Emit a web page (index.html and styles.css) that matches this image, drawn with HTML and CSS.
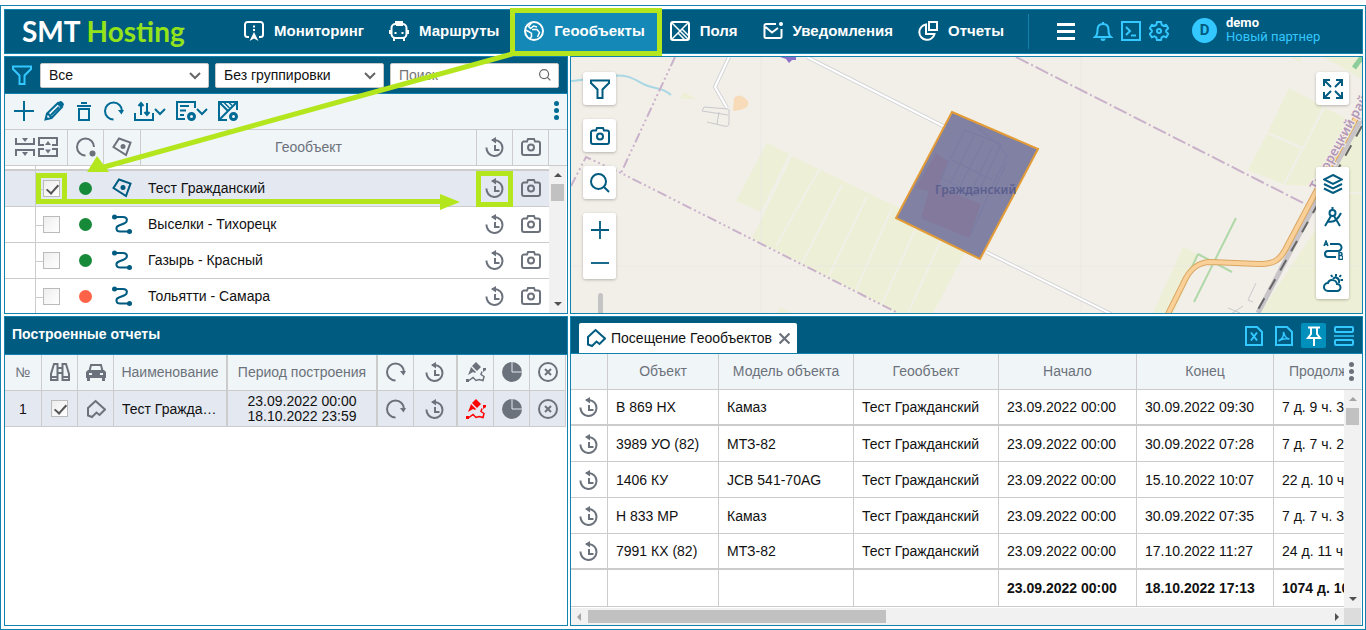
FILE: index.html
```html
<!DOCTYPE html>
<html lang="ru">
<head>
  <meta charset="UTF-8" />
  <meta name="viewport" content="width=device-width, initial-scale=1.0"/>
  <title>SMT Hosting</title>
  <link rel="stylesheet" href="styles.css">
</head>
<body>
  <!-- icon set, 20x20 grid -->
  <svg class="sprite" aria-hidden="true">
    <symbol id="i-monitor" viewBox="0 0 20 20"><path d="M5 16H3.500a2.500 2.500 0 0 1-2.500-2.500v-10A2.500 2.500 0 0 1 3.500 1h13A2.500 2.500 0 0 1 19 3.500v10a2.500 2.500 0 0 1-2.500 2.500H15M10 4.500v2M10 8v2"/><path class="fill" d="M10 11l4.500 9-4.500-2.500L5.500 20z"/></symbol>
    <symbol id="i-bus" viewBox="0 0 20 20"><rect x="2.500" y="3" width="15" height="14" rx="4"/><path d="M7 3V1h6v3H7M5 17v3M15 17v3M1 9v4M19 9v4"/><path class="fill" d="M5.500 11h2v2h-2zM12.500 11h2v2h-2z"/></symbol>
    <symbol id="i-globe" viewBox="0 0 20 20"><circle cx="10" cy="10" r="9"/><path class="line-thin" d="M8 1.500L4.500 5.500l2 2 3-2.500 3.500 1M1.500 9l3 1.500 3 2v3L6 17.500M8 8.500h5l2.500 3-2 4.500"/></symbol>
    <symbol id="i-field" viewBox="0 0 20 20"><rect x="1" y="1" width="18" height="18" rx="2"/><path class="line-thin" d="M1.500 1.500l17 17M18.500 1.500l-17 17M8 12l6.500 6.500M12 8l6.500 6.500"/></symbol>
    <symbol id="i-mail" viewBox="0 0 20 20"><path d="M13 3H3a1.500 1.500 0 0 0-1.500 1.500v11A1.500 1.500 0 0 0 3 17h14a1.500 1.500 0 0 0 1.500-1.500V8M2.500 6L9 11.500 15 7"/><circle class="fill" cx="18" cy="3" r="2"/></symbol>
    <symbol id="i-report" viewBox="0 0 20 20"><path d="M8 3.500a7.700 7.700 0 1 0 8.500 9.500H8zM11 1h8v8h-8z"/></symbol>
    <symbol id="i-menu" viewBox="0 0 20 20"><path class="thick" d="M1 3.500h18M1 10.500h18M1 17.500h18"/></symbol>
    <symbol id="i-bell" viewBox="0 0 20 20"><path d="M2 16h16c-2-1.500-2.500-3-2.500-7 0-3.500-2-6-5.500-6s-5.500 2.500-5.500 6c0 4-.5 5.500-2.500 7zM10 1v2"/><path class="fill" d="M7.500 17.500h5a2.500 2.500 0 0 1-5 0z"/></symbol>
    <symbol id="i-terminal" viewBox="0 0 20 20"><path d="M1 1h18v18H1zM5 6l4 4-4 4M10 14.500h5"/></symbol>
    <symbol id="i-gear" viewBox="0 0 20 20"><path d="M8 1h4l.7 2.800 1.800 1 2.700-.9 2 3.400-2 2v1.600l2 2-2 3.300-2.700-.8-1.800 1L12 19H8l-.7-2.600-1.800-1-2.700.8-2-3.300 2-2V9.300l-2-2 2-3.400 2.700.9 1.800-1z"/><circle cx="10" cy="10" r="2"/></symbol>
    <symbol id="i-funnel" viewBox="0 0 20 20"><path d="M1 1.500h18V4l-6.500 6.500V19h-5v-8.500L1 4z"/></symbol>
    <symbol id="i-search" viewBox="0 0 20 20"><circle cx="8.500" cy="8.500" r="7.500"/><path d="M13.500 13.500L19 19"/></symbol>
    <symbol id="i-chevron" viewBox="0 0 12 12"><path d="M1 4l5 5 5-5"/></symbol>
    <symbol id="i-plus" viewBox="0 0 20 20"><path d="M10 0v20M0 10h20"/></symbol>
    <symbol id="i-minus" viewBox="0 0 20 20"><path d="M0 10h20"/></symbol>
    <symbol id="i-pencil" viewBox="0 0 20 20"><path d="M1.500 18.500l1.500-6L14 2l4 4L7.500 17zM4 12.500l3.500 4M7 14l8-8"/><path class="fill" d="M13 3l3-3c2 0 4 2 4 4l-3 3zM1 19l1-4 3 3z"/></symbol>
    <symbol id="i-trash" viewBox="0 0 20 20"><path d="M3 5h14M7 2h6M5 8h10v11H5z"/></symbol>
    <symbol id="i-refresh" viewBox="0 0 20 20"><path d="M9.500 18.500a8.500 8.500 0 1 1 8.500-8.500"/><path class="fill" d="M14 9h6l-2.500 4.500z"/></symbol>
    <symbol id="i-transfer" viewBox="0 0 20 20"><path d="M1 12v7h18v-7M7 14V2M13 2v12M4.500 5L7 2l2.500 3M10.500 11l2.500 3 2.500-3"/></symbol>
    <symbol id="i-listclock" viewBox="0 0 20 20"><path d="M9 18H1V1h18v6M4 5h9M4 9.500h6M4 14h4"/><circle class="ring" cx="15.500" cy="15.500" r="3"/></symbol>
    <symbol id="i-fieldclock" viewBox="0 0 20 20"><path d="M9 19H1V1h18v8M1.500 1.500l8 8M18.500 1.500l-17 17"/><path class="line-thin" d="M6 1.500l5.500 5.500M11 1.500l3 3"/><circle class="ring" cx="15.500" cy="15.500" r="3"/></symbol>
    <symbol id="i-collapse" viewBox="0 0 20 20"><path d="M1 1v6h18V1M1 19v-6h18v6"/><path class="fill" d="M7 1h6l-3 4zM7 15h6l-3 4z"/></symbol>
    <symbol id="i-expand" viewBox="0 0 20 20"><path d="M6 8H1V1h18v7h-5M6 12H1v7h18v-7h-5"/><path class="fill" d="M7 8h6l-3-4zM7 12.500h6l-3 4z"/></symbol>
    <symbol id="i-status" viewBox="0 0 20 20"><path d="M9.500 18.500a8.500 8.500 0 1 1 8.500-8.500"/><circle class="fill" cx="16.500" cy="16.500" r="3"/></symbol>
    <symbol id="i-geo" viewBox="0 0 20 20"><path d="M7 1.500l11.500 4L14 18 1.500 10z"/><circle class="fill" cx="11" cy="9.500" r="2.500"/></symbol>
    <symbol id="i-route" viewBox="0 0 20 20"><path d="M3 3h8c5 0 5 5 1 6.500l-5 2c-4 1.500-3 6 1 6h9"/><circle class="fill" cx="2.500" cy="3" r="2.500"/><circle class="fill" cx="17.500" cy="17.500" r="2.500"/></symbol>
    <symbol id="i-history" viewBox="0 0 20 20"><path d="M7 3h3a8 8 0 1 1-8.500 7.500M10 8v5h4.500"/><path class="fill" d="M11 0v6.500L6 3z"/></symbol>
    <symbol id="i-camera" viewBox="0 0 20 20"><path d="M3 4.500h3L7 2h6l1 2.500h3a2 2 0 0 1 2 2V16a2 2 0 0 1-2 2H3a2 2 0 0 1-2-2V6.500a2 2 0 0 1 2-2z"/><circle cx="10" cy="10.500" r="3"/></symbol>
    <symbol id="i-binoculars" viewBox="0 0 20 20"><path d="M4 2h3.500v16H1v-6zM16 2h-3.500v16H19v-6zM8 6h4M8 11h4M1 15h6.500M12.500 15H19"/></symbol>
    <symbol id="i-car" viewBox="0 0 20 20"><path d="M3.500 9L5 3h10l1.500 6"/><path class="fill" fill-rule="evenodd" d="M2 8h16l2 2v6h-1v3h-3v-3H4v3H1v-3H0v-6zM3 11v2h3v-2zM14 11v2h3v-2z"/></symbol>
    <symbol id="i-area" viewBox="0 0 20 20"><path d="M9.500 2L19 10.500 13.500 16l-3-2.500L6 18l-4-1.500V9z"/></symbol>
    <symbol id="i-brush" viewBox="0 0 20 20"><path class="fill" d="M10 0l5 5-4 4-5-5zM5 5l5 5-1 1-2-1-5 3 2-5zM0 17h3v3H0zM17 6h3v2l-3 2z"/><path class="line-thin" d="M3 18.500l4-3 3 3 3-1 4 1 1-4-3-2 1-3"/></symbol>
    <symbol id="i-pie" viewBox="0 0 20 20"><circle class="fill" cx="10" cy="10" r="10"/><path class="light-line" d="M10 0v10h10"/></symbol>
    <symbol id="i-cancel" viewBox="0 0 20 20"><circle cx="10" cy="10" r="9"/><path d="M7 7l6 6M13 7l-6 6"/></symbol>
    <symbol id="i-close" viewBox="0 0 20 20"><path d="M1 1l18 18M19 1L1 19"/></symbol>
    <symbol id="i-xls" viewBox="0 0 20 20"><path d="M2 1h11l5 5v13H2zM7 6.500l6 8M13 6.500l-6 8"/></symbol>
    <symbol id="i-pdf" viewBox="0 0 20 20"><path d="M2 1h11l5 5v13H2z"/><path class="line-thin" d="M9.500 6c1 4 2 6 6 7-5-1-8 0-11 2 4-2 5.500-5 5-9z"/></symbol>
    <symbol id="i-pin" viewBox="0 0 20 20"><path d="M4 1.500h12M7 2v6l-3 4h12l-3-4V2M10 12v8"/></symbol>
    <symbol id="i-rows" viewBox="0 0 20 20"><rect x="1" y="1" width="18" height="5" rx="1"/><rect x="1" y="14" width="18" height="5" rx="1"/><path class="line-thin" d="M0 10h20"/></symbol>
    <symbol id="i-full" viewBox="0 0 20 20"><path d="M1 7V1h6M1 1l7 7M13 1h6v6M19 1l-7 7M1 13v6h6M1 19l7-7M19 13v6h-6M19 19l-7-7"/></symbol>
    <symbol id="i-layers" viewBox="0 0 20 20"><path d="M10 1l9 4.500-9 4.500-9-4.500zM1 10l9 4.500 9-4.500M1 14.500l9 4.500 9-4.500"/></symbol>
    <symbol id="i-compass" viewBox="0 0 20 20"><circle cx="9.500" cy="6" r="3"/><path d="M9.500 0v3M8 9L2 19M11 9l6 10M4 14c5 2 10 0 14-8"/></symbol>
    <symbol id="i-ab" viewBox="0 0 20 20"><path d="M7 4h8a3.500 3.500 0 0 1 0 7H5a3 3 0 0 0 0 6h8"/><path class="line-thin" d="M1 6l2-5 2 5M2 4.500h2M16 12.500h1.500a1 1 0 0 1 0 3H16zM16 15.500h2a1 1 0 0 1 0 4h-2z"/></symbol>
    <symbol id="i-weather" viewBox="0 0 20 20"><path d="M5 18a4 4 0 0 1 0-8c1-4 8-4 9 1a3.500 3.500 0 0 1 0 7zM10 6c2-3 7-1 6 4M13 1v2.500M8 2l1.500 2M18 2l-1.500 2M20 7h-2.500"/></symbol>
  </svg>

  <div class="app">
    <header class="topbar">
      <a class="logo" href="#">SMT <span>Hosting</span></a>
      <nav class="nav">
        <a href="#"><svg class="icon"><use href="#i-monitor"/></svg>Мониторинг</a>
        <a href="#"><svg class="icon"><use href="#i-bus"/></svg>Маршруты</a>
        <a href="#" class="active"><svg class="icon"><use href="#i-globe"/></svg>Геообъекты</a>
        <a href="#"><svg class="icon"><use href="#i-field"/></svg>Поля</a>
        <a href="#"><svg class="icon"><use href="#i-mail"/></svg>Уведомления</a>
        <a href="#"><svg class="icon"><use href="#i-report"/></svg>Отчеты</a>
      </nav>
      <div class="tools">
        <button class="menu" aria-label="Меню"><svg class="icon"><use href="#i-menu"/></svg></button>
        <button aria-label="События"><svg class="icon"><use href="#i-bell"/></svg></button>
        <button aria-label="Команды"><svg class="icon"><use href="#i-terminal"/></svg></button>
        <button aria-label="Настройки"><svg class="icon"><use href="#i-gear"/></svg></button>
      </div>
      <a class="user" href="#">
        <span class="avatar">D</span>
        <span><b>demo</b><br>Новый партнер</span>
      </a>
    </header>

    <section class="panel geo">
      <div class="filters">
        <svg class="icon cyan"><use href="#i-funnel"/></svg>
        <div class="field">
          <select aria-label="Фильтр"><option>Все</option></select>
          <svg class="chevron"><use href="#i-chevron"/></svg>
        </div>
        <div class="field">
          <select aria-label="Группировка"><option>Без группировки</option></select>
          <svg class="chevron"><use href="#i-chevron"/></svg>
        </div>
        <div class="field">
          <input type="text" placeholder="Поиск" aria-label="Поиск">
          <svg class="chevron"><use href="#i-search"/></svg>
        </div>
      </div>
      <div class="toolbar">
        <button aria-label="Добавить"><svg class="icon"><use href="#i-plus"/></svg></button>
        <button aria-label="Изменить"><svg class="icon"><use href="#i-pencil"/></svg></button>
        <button aria-label="Удалить"><svg class="icon"><use href="#i-trash"/></svg></button>
        <button aria-label="Обновить"><svg class="icon"><use href="#i-refresh"/></svg></button>
        <button aria-label="Импорт и экспорт"><svg class="icon"><use href="#i-transfer"/></svg><svg class="icon small"><use href="#i-chevron"/></svg></button>
        <button aria-label="Отчеты"><svg class="icon"><use href="#i-listclock"/></svg><svg class="icon small"><use href="#i-chevron"/></svg></button>
        <button aria-label="История полей"><svg class="icon"><use href="#i-fieldclock"/></svg></button>
        <button class="kebab" aria-label="Еще"><i></i><i></i><i></i></button>
      </div>
      <div class="scroll-area">
        <table class="grid geo-table">
          <colgroup><col class="c31"><col class="c32"><col class="c36"><col class="c37"><col><col class="c36"><col class="c36"></colgroup>
          <thead>
            <tr>
              <th colspan="2"><div class="pair"><svg class="icon"><use href="#i-collapse"/></svg><svg class="icon"><use href="#i-expand"/></svg></div></th>
              <th><svg class="icon"><use href="#i-status"/></svg></th>
              <th><svg class="icon"><use href="#i-geo"/></svg></th>
              <th>Геообъект</th>
              <th><svg class="icon"><use href="#i-history"/></svg></th>
              <th><svg class="icon"><use href="#i-camera"/></svg></th>
            </tr>
          </thead>
          <tbody>
            <tr class="sliver"><td></td><td colspan="6"></td></tr>
            <tr class="selected">
              <td></td>
              <td class="tree"><input type="checkbox" aria-label="Тест Гражданский" checked></td>
              <td><span class="dot"></span></td>
              <td><svg class="icon blue"><use href="#i-geo"/></svg></td>
              <td>Тест Гражданский</td>
              <td><svg class="icon"><use href="#i-history"/></svg></td>
              <td><svg class="icon"><use href="#i-camera"/></svg></td>
            </tr>
            <tr>
              <td></td>
              <td class="tree"><input type="checkbox" aria-label="Выселки - Тихорецк"></td>
              <td><span class="dot"></span></td>
              <td><svg class="icon blue"><use href="#i-route"/></svg></td>
              <td>Выселки - Тихорецк</td>
              <td><svg class="icon"><use href="#i-history"/></svg></td>
              <td><svg class="icon"><use href="#i-camera"/></svg></td>
            </tr>
            <tr>
              <td></td>
              <td class="tree"><input type="checkbox" aria-label="Газырь - Красный"></td>
              <td><span class="dot"></span></td>
              <td><svg class="icon blue"><use href="#i-route"/></svg></td>
              <td>Газырь - Красный</td>
              <td><svg class="icon"><use href="#i-history"/></svg></td>
              <td><svg class="icon"><use href="#i-camera"/></svg></td>
            </tr>
            <tr>
              <td></td>
              <td class="tree"><input type="checkbox" aria-label="Тольятти - Самара"></td>
              <td><span class="dot off"></span></td>
              <td><svg class="icon blue"><use href="#i-route"/></svg></td>
              <td>Тольятти - Самара</td>
              <td><svg class="icon"><use href="#i-history"/></svg></td>
              <td><svg class="icon"><use href="#i-camera"/></svg></td>
            </tr>
          </tbody>
        </table>
        <div class="side">
          <div class="side-head"></div>
          <div class="vbar"><span class="up dark"></span><span class="thumb"></span><span class="down"></span></div>
        </div>
      </div>
    </section>

    <section class="panel map">
      <svg class="map-view" viewBox="571 57 791 256" preserveAspectRatio="xMidYMid slice">
        <rect x="571" y="57" width="791" height="256" fill="#f2efe9"/>
        <!-- fields -->
        <g fill="#edf0d6">
          <path d="M767 143l22 11-28 58-25-11z"/>
          <path d="M792 156l105 51 68 45-32 61h-35L752 238z"/>
          <path d="M780 307l12 6h-14zM680 99l4-7 12 7z"/>
          <path d="M1289 88l34 18-20 41-35-15z"/>
          <path d="M1267 134l34 15-18 35-35-14z"/>
          <path d="M1325 108l37 18v60h-50l-27-1z"/>
          <path d="M1324 57h38v22zM1290 57h12l-2 5z"/>
          <path d="M1183 247l16 8-25 58h-21z"/>
          <path d="M1362 160v153h-102z"/>
        </g>
        <path d="M820 168l-44 78M842 185l-40 78M867 196l-38 80M892 208l-38 86M916 228l-36 80M942 238l-34 75" stroke="#f2efe9" stroke-width="2"/>
        <path d="M761 57v256M1081 57v256M571 266h791" stroke="#ebe8e4"/>
        <path d="M1300 57l14 8M1362 193h-20" stroke="#f2efe9" stroke-width="2"/>
        <!-- water and landmarks -->
        <path d="M571 81c14-1 24-4 38-5 18-2 24 2 34 8 12 6 18 2 28 11" fill="none" stroke="#a9d7e4" stroke-width="2"/>
        <path d="M734 98c5-5 9-2 14 3 2 6-4 8-8 9l-7 1z" fill="#f8dcba"/>
        <path d="M780 57h16v3h-4l-3 3-3-4z" fill="#8c6fc8"/>
        <!-- minor roads -->
        <g fill="none" stroke="#d3d3d6" stroke-width="4"><path d="M729 57l-14 30 12 21M807 57l142 72M986 252l125 62"/></g>
        <g fill="none" stroke="#fff" stroke-width="2"><path d="M729 57l-14 30 12 21M807 57l142 72M986 252l125 62"/></g>
        <path d="M728 109l-24-2-2 4 26 4M729 109v12c0 5-1 6-5 5l-17-4M719 112l-2 12M1256 283l-8 17 5 2M1225 318l18-12M1228 308l12 5" fill="none" stroke="#c9c9cd" stroke-width="1"/>
        <!-- green belts -->
        <path d="M1236 218l-42 84M1198 254l34 18M1198 254l-8 17" stroke="#b1d8a9" stroke-width="2"/>
        <path d="M1362 57l-8 11" stroke="#8dcc9b" stroke-width="5"/>
        <!-- district borders -->
        <g fill="none" stroke="#c9b1ca" stroke-width="2">
          <path d="M675 57l-54 116M571 186l15-29 35 16 277 140" stroke-dasharray="10 3 2 3 2 3 2 3"/>
          <path d="M1016 57l295 150" stroke-dasharray="14 3 2 3"/>
        </g>
        <!-- railway and highway -->
        <path d="M1362 118l-28 50-76 145" fill="none" stroke="#c8c4c8" stroke-width="5"/>
        <path d="M1362 126l-28 50-78 137" fill="none" stroke="#666" stroke-width="2" stroke-dasharray="12 10"/>
        <g fill="none">
          <path d="M1168 314l15-30c6-14 14-22 28-22l48 2c14 0 20-3 26-14l33-62 38-70" stroke="#d9a662" stroke-width="6"/>
          <path d="M1168 314l15-30c6-14 14-22 28-22l48 2c14 0 20-3 26-14l33-62 38-70" stroke="#fad099" stroke-width="4"/>
        </g>
        <text class="road-name" transform="translate(1317 191) rotate(-61)">Тихорецкий район</text>
        <!-- selected geo object -->
        <path d="M952 112l86 37-58 110-84-41z" fill="#8181a4" stroke="#e39b35" stroke-width="2"/>
        <path d="M936 153l12 8-12 32-20-5zM931 184l50 20-12 34-48-20z" fill="#83799d"/>
        <path d="M965 130l-24 48 36 18 24-52zM970 122l28 22M975 134l-24 48M984 140l-24 46M993 146l-22 46M952 160l40 20M998 144l9 12-12 24-24 54M1007 162l-14 30" fill="none" stroke="#797ba3" stroke-width="1"/>
        <text class="town" x="935" y="194">Гражданский</text>
      </svg>
      <div class="map-left">
        <button aria-label="Фильтр"><svg class="icon"><use href="#i-funnel"/></svg></button>
        <button aria-label="Снимок"><svg class="icon"><use href="#i-camera"/></svg></button>
        <button aria-label="Найти"><svg class="icon"><use href="#i-search"/></svg></button>
        <div class="group">
          <button aria-label="Приблизить"><svg class="icon zoom"><use href="#i-plus"/></svg></button>
          <button aria-label="Отдалить"><svg class="icon zoom"><use href="#i-minus"/></svg></button>
        </div>
        <span class="zoom-line"></span>
      </div>
      <div class="map-right">
        <button aria-label="Во весь экран"><svg class="icon"><use href="#i-full"/></svg></button>
        <div class="group">
          <button aria-label="Слои"><svg class="icon"><use href="#i-layers"/></svg></button>
          <button aria-label="Измерения"><svg class="icon"><use href="#i-compass"/></svg></button>
          <button aria-label="Маршрут"><svg class="icon"><use href="#i-ab"/></svg></button>
          <button aria-label="Погода"><svg class="icon"><use href="#i-weather"/></svg></button>
        </div>
      </div>
    </section>

    <section class="panel reports">
      <h2 class="title">Построенные отчеты</h2>
      <table class="grid report-table">
        <colgroup><col class="c37"><col class="c36"><col class="c36"><col><col class="c150"><col class="c36"><col class="c44"><col class="c36"><col class="c36"><col class="c36"></colgroup>
        <thead>
          <tr>
            <th>№</th>
            <th><svg class="icon"><use href="#i-binoculars"/></svg></th>
            <th><svg class="icon"><use href="#i-car"/></svg></th>
            <th class="bold-line">Наименование</th>
            <th class="bold-line">Период построения</th>
            <th><svg class="icon"><use href="#i-refresh"/></svg></th>
            <th class="bold-line"><svg class="icon"><use href="#i-history"/></svg></th>
            <th><svg class="icon"><use href="#i-brush"/></svg></th>
            <th><svg class="icon"><use href="#i-pie"/></svg></th>
            <th><svg class="icon"><use href="#i-cancel"/></svg></th>
          </tr>
        </thead>
        <tbody>
          <tr class="selected">
            <td>1</td>
            <td><input type="checkbox" aria-label="Показать отчет" checked></td>
            <td><svg class="icon"><use href="#i-area"/></svg></td>
            <td class="bold-line name">Тест Гражданский</td>
            <td class="bold-line period">23.09.2022 00:00<br>18.10.2022 23:59</td>
            <td><svg class="icon"><use href="#i-refresh"/></svg></td>
            <td class="bold-line"><svg class="icon"><use href="#i-history"/></svg></td>
            <td><svg class="icon red"><use href="#i-brush"/></svg></td>
            <td><svg class="icon"><use href="#i-pie"/></svg></td>
            <td><svg class="icon"><use href="#i-cancel"/></svg></td>
          </tr>
        </tbody>
      </table>
    </section>

    <section class="panel visits">
      <div class="tabbar">
        <div class="tab">
          <svg class="icon blue"><use href="#i-area"/></svg>
          <a href="#">Посещение Геообъектов</a>
          <button aria-label="Закрыть"><svg class="icon tiny"><use href="#i-close"/></svg></button>
        </div>
        <div class="tab-tools">
          <button aria-label="Excel"><svg class="icon"><use href="#i-xls"/></svg></button>
          <button aria-label="PDF"><svg class="icon"><use href="#i-pdf"/></svg></button>
          <button class="on" aria-label="Закрепить"><svg class="icon"><use href="#i-pin"/></svg></button>
          <button aria-label="Строки"><svg class="icon"><use href="#i-rows"/></svg></button>
        </div>
      </div>
      <div class="scroll-area">
        <table class="grid visit-table">
          <colgroup><col class="c37"><col class="c111"><col class="c135"><col class="c145"><col class="c138"><col class="c137"><col></colgroup>
          <thead>
            <tr><th></th><th>Объект</th><th>Модель объекта</th><th>Геообъект</th><th>Начало</th><th>Конец</th><th class="cut">Продолжительность</th></tr>
          </thead>
          <tbody>
            <tr class="thick-row"><td><svg class="icon"><use href="#i-history"/></svg></td><td>В 869 НХ</td><td>Камаз</td><td>Тест Гражданский</td><td>23.09.2022 00:00</td><td>30.09.2022 09:30</td><td>7 д. 9 ч. 30 м.</td></tr>
            <tr><td><svg class="icon"><use href="#i-history"/></svg></td><td>3989 УО (82)</td><td>МТЗ-82</td><td>Тест Гражданский</td><td>23.09.2022 00:00</td><td>30.09.2022 07:28</td><td>7 д. 7 ч. 28 м.</td></tr>
            <tr><td><svg class="icon"><use href="#i-history"/></svg></td><td>1406 КУ</td><td>JCB 541-70AG</td><td>Тест Гражданский</td><td>23.09.2022 00:00</td><td>15.10.2022 10:07</td><td>22 д. 10 ч.</td></tr>
            <tr><td><svg class="icon"><use href="#i-history"/></svg></td><td>Н 833 МР</td><td>Камаз</td><td>Тест Гражданский</td><td>23.09.2022 00:00</td><td>30.09.2022 07:35</td><td>7 д. 7 ч. 35 м.</td></tr>
            <tr class="thick-row"><td><svg class="icon"><use href="#i-history"/></svg></td><td>7991 КХ (82)</td><td>МТЗ-82</td><td>Тест Гражданский</td><td>23.09.2022 00:00</td><td>17.10.2022 11:27</td><td>24 д. 11 ч.</td></tr>
          </tbody>
          <tfoot>
            <tr><td></td><td></td><td></td><td></td><td>23.09.2022 00:00</td><td>18.10.2022 17:13</td><td>1074 д. 10 ч.</td></tr>
          </tfoot>
        </table>
        <div class="side">
          <div class="side-head"><button class="kebab" aria-label="Столбцы"><i></i><i></i><i></i></button></div>
          <div class="vbar"><span class="up"></span><span class="thumb"></span><span class="down"></span></div>
        </div>
      </div>
      <div class="hbar"><span class="left"></span><span class="hthumb"></span><span class="right"></span><span class="corner"></span></div>
    </section>

    <!-- hint arrows over the interface -->
    <svg class="hints" aria-hidden="true">
      <g fill="none" stroke="#b4e61e" stroke-width="5">
        <path d="M512.500 10.500h147v43h-147zM38.500 175.500h26v26h-26zM478.500 173.500h32v31h-32z"/>
        <path d="M512 54L104 167M62 201.500h380"/>
      </g>
      <path d="M87 172l10-16 12 16zM440 194l20 8-20 8z" fill="#b4e61e"/>
    </svg>
  </div>
</body>
</html>
```

FILE: styles.css
```css
* {
  box-sizing: border-box;
}
body {
  margin: 0;
  padding-top: 5px;
  height: 100vh;
  font-family: "Liberation Sans", Arial, sans-serif;
  font-size: 14px;
  color: #111;
  background: #fff;
}
a {
  color: inherit;
  text-decoration: none;
}
button {
  padding: 0;
  border: 0;
  background: none;
  color: inherit;
  display: flex;
  align-items: center;
  justify-content: center;
  cursor: pointer;
}
.sprite {
  display: none;
}
.icon {
  display: block;
  flex: none;
  width: 20px;
  height: 20px;
  fill: none;
  stroke: currentColor;
  stroke-width: 2;
}
.fill {
  fill: currentColor;
  stroke: none;
}
.thick {
  stroke-width: 3;
}
.line-thin {
  stroke-width: 1.5;
}
.ring {
  fill: #f0f5f8;
  stroke-width: 3;
}
.light-line {
  stroke: #e4e8f0;
  stroke-width: 1;
}
.cyan {
  color: #33c8ff;
}
.blue {
  color: #005b80;
}
.red {
  color: #f00;
}
.small {
  width: 12px;
  height: 12px;
}
.tiny {
  width: 11px;
  height: 11px;
  stroke-width: 4;
}

.app {
  height: 100%;
  border: 1px solid #1482af;
  padding: 3px 2px 3px 3px;
  display: grid;
  grid-template-columns: 564px minmax(0, 1fr);
  grid-template-rows: 45px minmax(0, 258fr) minmax(0, 310fr);
  gap: 2px;
}
.panel, .topbar {
  border: 1px solid #1482af;
}
.panel {
  display: flex;
  flex-direction: column;
  overflow: hidden;
}

/* top bar */
.topbar {
  grid-column: 1 / -1;
  display: flex;
  align-items: center;
  background: #005b80;
  color: #fff;
}
.logo {
  width: 227px;
  padding: 0 0 2px 17px;
  font: bold 28px/36px Lato, "Open Sans", sans-serif;
  white-space: nowrap;
}
.logo span {
  color: #93e31b;
}
.nav {
  display: flex;
  align-self: stretch;
  font-size: 15px;
  font-weight: bold;
}
.nav a {
  display: flex;
  align-items: center;
  gap: 10px;
  padding: 0 12px 2px;
}
.nav a + a {
  padding-left: 13px;
}
.nav .active {
  background: #1488b6;
}
.tools {
  display: flex;
  align-items: center;
  gap: 8px;
  height: 35px;
  margin: 0 0 1px 12px;
  padding-left: 27px;
  border-left: 1px solid #1482af;
  color: #33c8ff;
}
.menu {
  margin-right: 9px;
  color: #fff;
}
.user {
  display: flex;
  align-items: center;
  gap: 9px;
  margin-left: 23px;
  padding-bottom: 3px;
  font: 13px/14px Roboto, "Liberation Sans", sans-serif;
  color: #33c8ff;
  white-space: nowrap;
}
.user b {
  color: #fff;
}
.avatar {
  width: 25px;
  height: 25px;
  border-radius: 50%;
  background: #33c8ff;
  color: #005b80;
  font-weight: bold;
  font-size: 15px;
  line-height: 25px;
  text-align: center;
}

/* filters and toolbar */
.filters {
  display: flex;
  align-items: center;
  gap: 6px;
  height: 37px;
  padding: 0 8px 0 7px;
  background: #005b80;
  border-bottom: 1px solid #1482af;
}
.filters > .icon {
  margin-right: 2px;
}
.field {
  position: relative;
  flex: 1;
}
.field select, .field input {
  display: block;
  width: 100%;
  height: 25px;
  padding: 0 8px;
  border: 1px solid #c8c8c8;
  border-radius: 2px;
  background: #fff;
  color: #111;
  font: inherit;
  appearance: none;
}
.field input::placeholder {
  color: #757575;
}
.chevron {
  position: absolute;
  right: 8px;
  top: 6px;
  width: 12px;
  height: 12px;
  fill: none;
  stroke: #666;
  stroke-width: 2;
  pointer-events: none;
}
.toolbar {
  display: flex;
  align-items: center;
  gap: 10px;
  height: 35px;
  padding: 0 8px 2px 9px;
  background: #f0f5f8;
  color: #006b95;
}
.kebab {
  flex-direction: column;
  gap: 2px;
}
.toolbar .kebab {
  margin-left: auto;
}
.kebab i {
  width: 5px;
  height: 5px;
  border-radius: 50%;
  background: currentColor;
}

/* tables */
.scroll-area {
  flex: 1;
  min-height: 0;
  display: flex;
  align-items: stretch;
  overflow: hidden;
}
.geo .scroll-area {
  border-top: 1px solid #ccc;
}
.grid {
  flex: 1;
  width: 100%;
  min-width: 0;
  align-self: flex-start;
  table-layout: fixed;
  border-collapse: separate;
  border-spacing: 0;
}
.grid th, .grid td {
  height: 36px;
  padding: 0;
  border: 0 solid #ccc;
  border-width: 0 1px 1px 0;
  overflow: hidden;
  white-space: nowrap;
}
.grid th {
  padding-bottom: 1px;
  background: #f0f5f8;
  color: #6c727b;
  font-weight: normal;
}
.grid .icon {
  margin: 0 auto;
}
.grid td .icon:not(.blue):not(.red) {
  color: #6c727b;
}
.selected {
  background: #e4e8f0;
}
.grid .bold-line {
  border-right-width: 2px;
}
.c31 { width: 31px; }
.c32 { width: 32px; }
.c36 { width: 36px; }
.c37 { width: 37px; }
.c44 { width: 44px; }
.c111 { width: 111px; }
.c135 { width: 135px; }
.c137 { width: 137px; }
.c138 { width: 138px; }
.c145 { width: 145px; }
.c150 { width: 150px; }

.pair {
  display: flex;
  justify-content: center;
  gap: 3px;
}
.grid .pair .icon {
  margin: 0;
}
.geo-table td {
  padding: 0 1px 1px 0;
  border-right-width: 0;
}
.geo-table td:first-child {
  border-right-width: 1px;
}
.geo-table td:nth-child(5) {
  padding-left: 7px;
}
.geo-table .sliver td {
  height: 5px;
  border-bottom-width: 2px;
}
.tree {
  background: linear-gradient(#ccc, #ccc) 0 18px / 7px 1px no-repeat;
}
.grid input {
  appearance: none;
  display: block;
  width: 17px;
  height: 17px;
  margin: 0 auto;
  border: 1px solid #bbb;
  background: linear-gradient(135deg, #eee, #fff);
}
.grid input:checked::before {
  content: "";
  display: block;
  width: 5px;
  height: 10px;
  margin: 1px 0 0 5px;
  border: solid #555;
  border-width: 0 2px 2px 0;
  transform: rotate(42deg);
}
.dot {
  display: block;
  width: 13px;
  height: 13px;
  margin: 0 auto;
  border-radius: 50%;
  background: #168a38;
}
.dot.off {
  background: #ff6347;
}

/* scroll bars */
.side {
  width: 18px;
  display: flex;
  flex-direction: column;
}
.side-head {
  height: 36px;
  padding-right: 3px;
  background: #f0f5f8;
  border-bottom: 1px solid #ccc;
  color: #6c727b;
  display: flex;
  justify-content: center;
}
.vbar {
  flex: 1;
  display: flex;
  flex-direction: column;
  align-items: center;
  margin-right: 1px;
  padding: 7px 0;
  background: #f1f1f1;
}
.up, .down, .left, .right {
  width: 0;
  height: 0;
  border: 4px solid transparent;
}
.up {
  border-top: 0;
  border-bottom-color: #a3a3a3;
}
.up.dark {
  border-bottom-color: #505050;
}
.down {
  margin-top: auto;
  border-bottom: 0;
  border-top-color: #505050;
}
.thumb {
  width: 13px;
  height: 17px;
  margin-top: 7px;
  background: #c1c1c1;
}
.hbar {
  display: flex;
  align-items: center;
  height: 17px;
  margin-right: 1px;
  padding-left: 6px;
  background: #f1f1f1;
}
.left {
  border-left: 0;
  border-right-color: #a3a3a3;
}
.right {
  margin: 0 5px 0 auto;
  border-right: 0;
  border-left-color: #505050;
}
.hthumb {
  width: 38%;
  height: 13px;
  margin-left: 7px;
  background: #c1c1c1;
}
.corner {
  width: 17px;
  height: 17px;
  background: #dcdcdc;
}

/* map */
.map {
  position: relative;
}
.map-view {
  display: block;
  width: 100%;
  height: 100%;
}
.town {
  font: 600 12px "Noto Sans", sans-serif;
  fill: #5c5e8e;
}
.road-name {
  font: 600 13px "Noto Sans", sans-serif;
  fill: #b597b8;
  stroke: #f2efe9;
  stroke-width: 2;
  paint-order: stroke;
}
.map-left, .map-right {
  position: absolute;
  top: 15px;
  display: flex;
  flex-direction: column;
  gap: 14px;
  color: #005b80;
}
.map-left {
  left: 12px;
}
.map-right {
  right: 13px;
  gap: 62px;
}
.map button, .group {
  width: 33px;
  min-height: 33px;
  border-radius: 3px;
  background: #fff;
}
.map > div > button, .group {
  box-shadow: 0 1px 3px rgba(0, 0, 0, 0.25);
}
.icon.zoom {
  width: 18px;
  height: 18px;
}
.zoom-line {
  width: 5px;
  height: 24px;
  margin-left: 15px;
  border-radius: 3px;
  background: #c4c4c4;
}

/* reports */
.title {
  margin: 0;
  height: 38px;
  padding-left: 7px;
  line-height: 35px;
  font-size: 14px;
  background: #005b80;
  border-bottom: 1px solid #1482af;
  color: #fff;
}
.report-table {
  flex: none;
  width: calc(100% - 1px);
}
.report-table td {
  text-align: center;
}
.report-table .name {
  padding: 0 8px;
  text-overflow: ellipsis;
}
.period {
  line-height: 15px;
}

/* visits */
.tabbar {
  display: flex;
  align-items: flex-end;
  justify-content: space-between;
  height: 37px;
  padding: 0 6px 0 8px;
  background: #005b80;
  border-bottom: 1px solid #1482af;
}
.tab {
  display: flex;
  align-items: center;
  height: 30px;
  padding: 0 7px;
  border-radius: 2px 2px 0 0;
  background: #fff;
}
.tab a {
  margin: 0 7px 0 5px;
}
.tab button {
  color: #6c727b;
}
.tab-tools {
  display: flex;
  gap: 5px;
  margin-bottom: 5px;
  color: #33c8ff;
}
.tab-tools button {
  width: 25px;
  height: 25px;
  border-radius: 2px;
}
.tab-tools .on {
  background: #0090bb;
  color: #fff;
}
.visit-table td + td {
  padding-left: 8px;
}
.visit-table th:last-child, .visit-table td:last-child {
  border-right-width: 0;
}
.visit-table .cut {
  padding-left: 15px;
  text-align: left;
}
.visit-table .thick-row td {
  border-bottom-width: 2px;
}
.visit-table tfoot td {
  height: 37px;
  font-weight: bold;
}

.hints {
  position: absolute;
  left: 0;
  top: 0;
  width: 100%;
  height: 100%;
  pointer-events: none;
}
```
